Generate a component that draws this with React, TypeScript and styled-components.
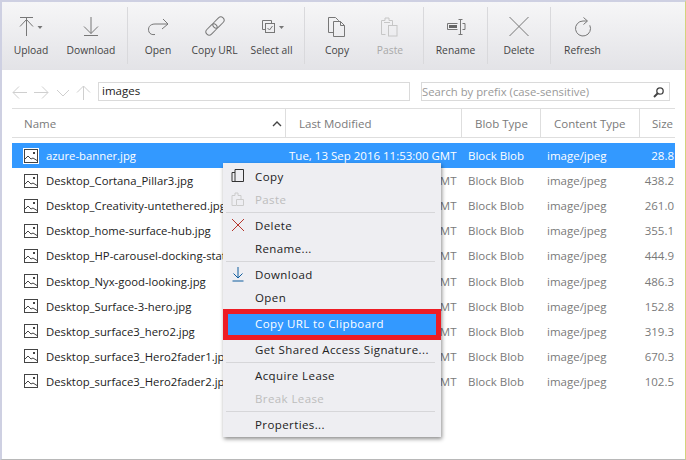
import * as React from 'react';
import styled, { createGlobalStyle } from 'styled-components';

const GlobalStyle = createGlobalStyle`
  html, body {
    margin: 0;
    padding: 0;
    background: #fff;
  }
`;

const ToolIcons: { [key: string]: React.ReactNode } = {
  upload: (
    <>
      <path d="M1 3.5H14M7.5 4V22M1 12.5L7.5 5.5L14 12.5" />
      <path d="M18.5 12H23.5L21 15Z" fill="#777" stroke="none" />
    </>
  ),
  download: <path d="M12 3V19.5M5 12.5L12 19.5L19 12.5M5 21.5H19" />,
  open: <path d="M17 5L22 10L16 15M22 10H9C3.5 10 1.5 14 3 18C4 20 6 21 9 20.5" />,
  link: (
    <>
      <rect x="2" y="12.25" width="13" height="6.5" rx="3.25" transform="rotate(-45 8.5 15.5)" />
      <rect x="9" y="5.25" width="13" height="6.5" rx="3.25" transform="rotate(-45 15.5 8.5)" />
    </>
  ),
  selectAll: (
    <>
      <path d="M5 15.5H2.5V6.5H11.5V9" />
      <rect x="5.5" y="9.5" width="9" height="9" />
      <path d="M7.5 14L9.5 16L12.5 12" />
      <path d="M19 12H24L21.5 15Z" fill="#777" stroke="none" />
    </>
  ),
  copy: <path d="M8 18.5H3.5V3.5H10.5L13.5 6.5V7.5M8.5 7.5H15.5L19.5 11.5V22.5H8.5ZM15.5 7.5V11.5H19.5" />,
  paste: (
    <>
      <path d="M7.5 20.5H3.5V6.5H7V4H11V6.5H14.5V11M6 8.5H12" />
      <rect x="10.5" y="11.5" width="8.5" height="10.5" />
    </>
  ),
  rename: (
    <>
      <path d="M13.5 9.5H3.5V15.5H13.5M18.5 9.5H21V15.5H18.5M14.5 5.5H18.5M14.5 20.5H18.5M16.5 5.5V20.5" />
      <rect x="5" y="11" width="8" height="3" fill="#666" stroke="none" />
    </>
  ),
  remove: <path d="M2.5 3L21.5 22M21.5 3L2.5 22" />,
  refresh: <path d="M16 7H12A7.5 7.5 0 1 0 18.8 11.3M12.5 3.5L16.5 7L12.5 10.5" />,
};

type ToolItem = { icon: string; label: string; width: number; disabled?: boolean };

const toolGroups: { left: number; right: number; items: ToolItem[] }[] = [
  {
    left: 0,
    right: 5,
    items: [
      { icon: 'upload', label: 'Upload', width: 58 },
      { icon: 'download', label: 'Download', width: 62 },
    ],
  },
  {
    left: 2,
    right: 4,
    items: [
      { icon: 'open', label: 'Open', width: 56 },
      { icon: 'link', label: 'Copy URL', width: 57 },
      { icon: 'selectAll', label: 'Select all', width: 57 },
    ],
  },
  {
    left: 5,
    right: 7,
    items: [
      { icon: 'copy', label: 'Copy', width: 54 },
      { icon: 'paste', label: 'Paste', width: 52, disabled: true },
    ],
  },
  { left: 0, right: 0, items: [{ icon: 'rename', label: 'Rename', width: 63 }] },
  { left: 0, right: 0, items: [{ icon: 'remove', label: 'Delete', width: 62 }] },
  { left: 0, right: 0, items: [{ icon: 'refresh', label: 'Refresh', width: 63 }] },
];

const files = [
  { name: 'azure-banner.jpg', size: '28.8' },
  { name: 'Desktop_Cortana_Pillar3.jpg', size: '438.2' },
  { name: 'Desktop_Creativity-untethered.jpg', size: '261.0' },
  { name: 'Desktop_home-surface-hub.jpg', size: '355.1' },
  { name: 'Desktop_HP-carousel-docking-station.jpg', size: '444.9' },
  { name: 'Desktop_Nyx-good-looking.jpg', size: '486.3' },
  { name: 'Desktop_Surface-3-hero.jpg', size: '152.8' },
  { name: 'Desktop_surface3_hero2.jpg', size: '319.3' },
  { name: 'Desktop_surface3_Hero2fader1.jpg', size: '670.3' },
  { name: 'Desktop_surface3_Hero2fader2.jpg', size: '102.5' },
];

const FileIcon = ({ selected }: { selected?: boolean }) => (
  <PictureIcon viewBox="0 0 16 16" $selected={selected}>
    <rect x="1.5" y="1.5" width="13" height="13" fill="#fff" stroke="#444" />
    <path d="M2 11L5 8L8 11L10 10L14 12.5" fill="none" stroke="#444" />
    <rect x="10" y="4" width="2" height="2" fill="#444" />
  </PictureIcon>
);

export default function App() {
  return (
    <Window>
      <GlobalStyle />
      <Toolbar>
        {toolGroups.map((group) => (
          <ToolGroup key={group.items[0].label} $left={group.left} $right={group.right}>
            {group.items.map((item) => (
              <ToolButton key={item.label} $width={item.width} $disabled={item.disabled}>
                <ToolIcon viewBox="0 0 24 24" $disabled={item.disabled}>
                  {ToolIcons[item.icon]}
                </ToolIcon>
                {item.label}
              </ToolButton>
            ))}
          </ToolGroup>
        ))}
      </Toolbar>

      <NavRow>
        <NavArrows viewBox="0 0 84 19">
          <path d="M1 10.5H15M7 4.5L1 10.5L7 16.5" />
          <path d="M22 10.5H36M30 4.5L36 10.5L30 16.5" />
          <path d="M45 8L51 14L57 8" />
          <path d="M71.5 18V4M65 10.5L71.5 4L78 10.5" />
        </NavArrows>
        <PathInput>images</PathInput>
        <SearchBox>
          Search by prefix (case-sensitive)
          <SearchIcon viewBox="0 0 14 14">
            <circle cx="8" cy="6" r="3.2" />
            <path d="M5.5 8.5L2 12" strokeWidth="2" />
          </SearchIcon>
        </SearchBox>
      </NavRow>

      <Table>
        <HeaderRow>
          <HeaderCell $width={274} $left={12}>
            Name
            <SortMark viewBox="0 0 10 6">
              <path d="M1 5L5 1L9 5" />
            </SortMark>
          </HeaderCell>
          <HeaderCell $width={176} $left={13}>Last Modified</HeaderCell>
          <HeaderCell $width={79} $left={13}>Blob Type</HeaderCell>
          <HeaderCell $width={99} $left={13}>Content Type</HeaderCell>
          <SizeHeader>Size</SizeHeader>
        </HeaderRow>
        <Rows>
          {files.map((file, i) => (
            <Row key={file.name} $selected={i === 0}>
              <NameCell $selected={i === 0}>
                <FileIcon selected={i === 0} />
                <FileName>{file.name}</FileName>
              </NameCell>
              <DateCell>Tue, 13 Sep 2016 11:53:00 GMT</DateCell>
              <BlobCell>Block Blob</BlobCell>
              <TypeCell>image/jpeg</TypeCell>
              <SizeCell>{file.size}</SizeCell>
            </Row>
          ))}
        </Rows>
      </Table>

      <Menu>
        <MenuItem>
          <MenuIcon viewBox="0 0 14 16" $color="#333">
            <path d="M4 12.5H1V3.5H4M4 .5H12.5V12.5H4Z" transform="translate(0 1)" />
          </MenuIcon>
          Copy
        </MenuItem>
        <MenuItem $disabled>
          <MenuIcon viewBox="0 0 14 16" $color="#ccc">
            <path d="M5 14.5H1V4.5H4V2H7V4.5H10V8M5.5 8.5H12.5V14.5H5.5Z" />
          </MenuIcon>
          Paste
        </MenuItem>
        <MenuDivider />
        <MenuItem>
          <MenuIcon viewBox="0 0 14 16" $color="#b5362c">
            <path d="M1 2L13 14M13 2L1 14" />
          </MenuIcon>
          Delete
        </MenuItem>
        <MenuItem>Rename...</MenuItem>
        <MenuDivider />
        <MenuItem>
          <MenuIcon viewBox="0 0 14 16" $color="#0f5c9e">
            <path d="M7 1V12M2.5 7.5L7 12L11.5 7.5M1.5 15H12.5" />
          </MenuIcon>
          Download
        </MenuItem>
        <MenuItem>Open</MenuItem>
        <HighlightFrame>
          <HighlightItem>Copy URL to Clipboard</HighlightItem>
        </HighlightFrame>
        <MenuItem>Get Shared Access Signature...</MenuItem>
        <MenuDivider />
        <MenuItem>Acquire Lease</MenuItem>
        <MenuItem $disabled>Break Lease</MenuItem>
        <MenuDivider />
        <MenuItem>Properties...</MenuItem>
      </Menu>
    </Window>
  );
}

const Window = styled.div`
  position: relative;
  box-sizing: border-box;
  width: 686px;
  height: 460px;
  overflow: hidden;
  background: #fff;
  border-top: 2px solid #ced0e2;
  border-left: 2px solid #ced0e2;
  border-right: 1px solid #d4d27c;
  border-bottom: 1px solid #b8b8b8;
  font-family: "Open Sans", "Noto Sans", sans-serif;
`;

const Toolbar = styled.div`
  display: flex;
  height: 68px;
  background: linear-gradient(#f6f6f7, #e3e3e7);
`;

const ToolGroup = styled.div<{ $left: number; $right: number }>`
  display: flex;
  margin: 5px 0 6px;
  padding-left: ${(p) => p.$left}px;
  padding-right: ${(p) => p.$right}px;
  border-right: 1px solid #d9d9dc;

  &:last-child {
    border-right: none;
  }
`;

const ToolButton = styled.div<{ $width: number; $disabled?: boolean }>`
  display: flex;
  flex-direction: column;
  align-items: center;
  width: ${(p) => p.$width}px;
  padding-top: 7px;
  font-size: 10.3px;
  line-height: 14px;
  white-space: nowrap;
  color: ${(p) => (p.$disabled ? '#a9a9a9' : '#444')};
`;

const ToolIcon = styled.svg<{ $disabled?: boolean }>`
  width: 24px;
  height: 24px;
  margin-bottom: 5px;
  fill: none;
  stroke: ${(p) => (p.$disabled ? '#c6c6c6' : '#777')};
  stroke-width: 1;
`;

const NavRow = styled.div`
  display: flex;
  align-items: stretch;
  height: 19px;
  margin-top: 12px;
  padding-left: 10px;
`;

const NavArrows = styled.svg`
  width: 84px;
  height: 19px;
  margin-right: 2px;
  fill: none;
  stroke: #cfcfcf;
  stroke-width: 1;
`;

const PathInput = styled.div`
  box-sizing: border-box;
  width: 312px;
  padding-left: 3px;
  border: 1px solid #dadada;
  font-size: 11.5px;
  line-height: 16px;
  color: #222;
`;

const SearchBox = styled.div`
  display: flex;
  align-items: center;
  justify-content: space-between;
  box-sizing: border-box;
  width: 249px;
  margin-left: 11px;
  padding-right: 3px;
  border: 1px solid #dadada;
  font-size: 11.3px;
  color: #999;
`;

const SearchIcon = styled.svg`
  width: 14px;
  height: 14px;
  fill: none;
  stroke: #444;
  stroke-width: 1.3;
`;

const Table = styled.div`
  width: 663px;
  margin: 7px 0 0 10px;
`;

const HeaderRow = styled.div`
  display: flex;
  box-sizing: border-box;
  height: 30px;
  border-top: 1px solid #dedede;
  border-bottom: 1px solid #dedede;
`;

const HeaderCell = styled.div<{ $width: number; $left: number }>`
  position: relative;
  box-sizing: border-box;
  flex: none;
  width: ${(p) => p.$width}px;
  padding-left: ${(p) => p.$left}px;
  border-right: 1px solid #dedede;
  font-size: 11.5px;
  line-height: 29px;
  white-space: nowrap;
  color: #7a7a7a;
`;

const SizeHeader = styled.div`
  flex: 1;
  padding-left: 12px;
  font-size: 11.5px;
  line-height: 29px;
  color: #7a7a7a;
`;

const SortMark = styled.svg`
  position: absolute;
  right: 3px;
  top: 12px;
  width: 10px;
  height: 6px;
  fill: none;
  stroke: #444;
  stroke-width: 1.4;
`;

const Rows = styled.div`
  display: flex;
  flex-direction: column;
  margin-top: 5px;
`;

const Row = styled.div<{ $selected?: boolean }>`
  display: flex;
  align-items: center;
  height: 25.1px;
  font-size: 11.5px;
  white-space: nowrap;
  color: ${(p) => (p.$selected ? '#fff' : '#7a7a7a')};
  background: ${(p) => (p.$selected ? '#3399ff' : 'transparent')};
`;

const NameCell = styled.div<{ $selected?: boolean }>`
  display: flex;
  align-items: center;
  flex: none;
  gap: 7px;
  box-sizing: border-box;
  width: 277px;
  padding-left: 11px;
  overflow: hidden;
  color: ${(p) => (p.$selected ? '#fff' : '#222')};
`;

const FileName = styled.span`
  font-size: 11.3px;
  white-space: nowrap;
`;

const PictureIcon = styled.svg<{ $selected?: boolean }>`
  flex: none;
  width: 16px;
  height: 16px;
  outline: ${(p) => (p.$selected ? '1px solid #fff' : 'none')};
  outline-offset: -1px;
`;

const DateCell = styled.div`
  flex: none;
  width: 179px;
`;

const BlobCell = styled.div`
  flex: none;
  width: 79px;
`;

const TypeCell = styled.div`
  flex: none;
  width: 88px;
`;

const SizeCell = styled.div`
  flex: 1;
  padding-right: 1px;
  text-align: right;
`;

const Menu = styled.div`
  position: absolute;
  left: 221px;
  top: 161px;
  box-sizing: border-box;
  width: 218px;
  padding: 2px 0 1px;
  background: #eeeef2;
  box-shadow: 1px 2px 4px rgba(0, 0, 0, 0.45);
`;

const MenuItem = styled.div<{ $disabled?: boolean }>`
  position: relative;
  height: 23px;
  padding-left: 32px;
  font-size: 11.5px;
  line-height: 23px;
  letter-spacing: 0.4px;
  white-space: nowrap;
  color: ${(p) => (p.$disabled ? '#bdbdbd' : '#222')};
`;

const MenuIcon = styled.svg<{ $color: string }>`
  position: absolute;
  left: 8px;
  top: 3px;
  width: 14px;
  height: 16px;
  fill: none;
  stroke: ${(p) => p.$color};
  stroke-width: 1;
`;

const MenuDivider = styled.div`
  height: 1px;
  margin: 1px 6px 1px 3px;
  background: #d6d6d9;
`;

const HighlightFrame = styled.div`
  box-sizing: border-box;
  height: 31px;
  margin-bottom: -2px;
  border: 5px solid #ed1c24;
`;

const HighlightItem = styled.div`
  height: 21px;
  padding-left: 27px;
  font-size: 11.5px;
  line-height: 19px;
  letter-spacing: 0.4px;
  color: #fff;
  background: #3399ff;
`;
